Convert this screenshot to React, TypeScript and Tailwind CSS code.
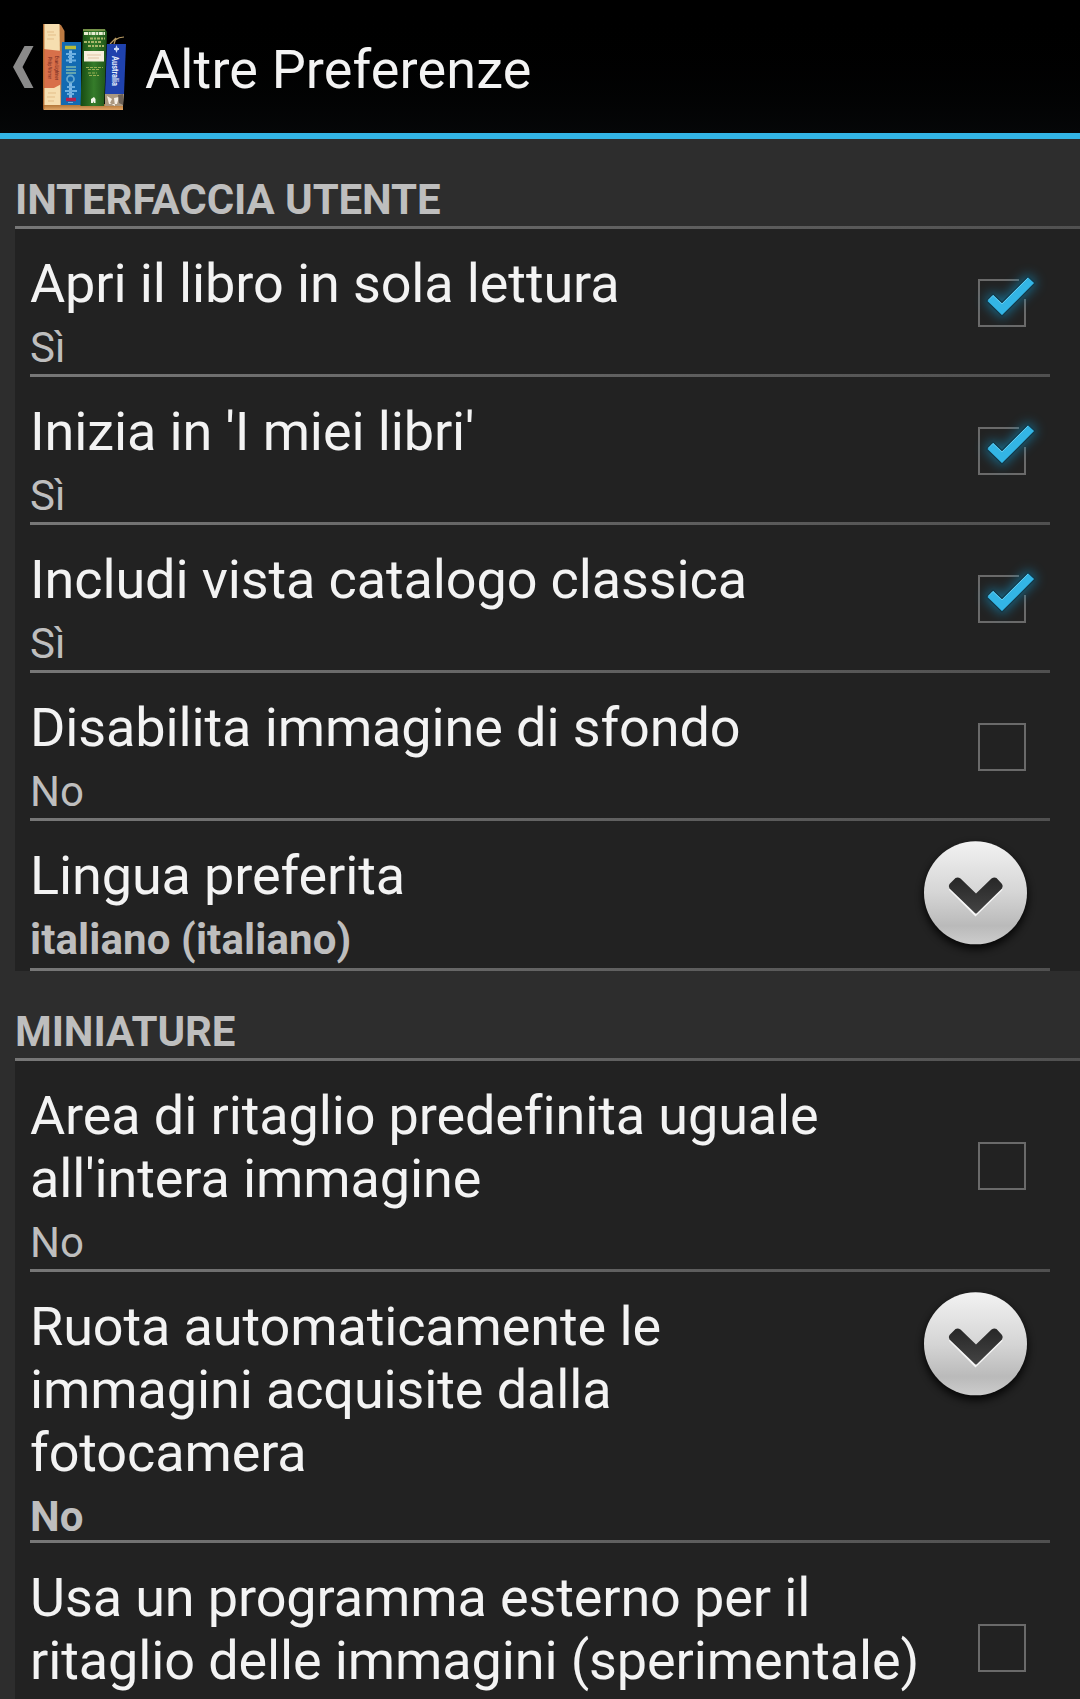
import React from "react";

function BooksIcon() {
  return (
    <svg className="ml-[3px] h-[90px] w-[92px] shrink-0" viewBox="40 20 92 90">
      <defs>
        <linearGradient id="greenBook" x1="0" x2="1" y1="0" y2="0">
          <stop offset="0" stopColor="#174a12" />
          <stop offset="0.5" stopColor="#357c2a" />
          <stop offset="1" stopColor="#1f5419" />
        </linearGradient>
        <linearGradient id="shelf" x1="0" x2="0" y1="0" y2="1">
          <stop offset="0" stopColor="#a96d30" />
          <stop offset="1" stopColor="#e0a566" />
        </linearGradient>
      </defs>
      {/* shelf */}
      <path d="M43.5 104 H123 V110 H43.5 Z" fill="url(#shelf)" />
      {/* orange book */}
      <path d="M58 24 L61 25 L64.500 31 V44 L61.500 106 H59 Z" fill="#bd7a42" />
      <path d="M43.5 24 H59.5 L60.500 105 H43.5 Z" fill="#f6deb0" />
      <path d="M43.5 49 L61.5 51 V84 L54 88 H43.5 Z" fill="#d8704a" />
      <path d="M43.8 24 V109" stroke="#b76a2c" strokeWidth="1.200" />
      <path d="M47 32 H54 M48 35 H56 M47 39 H54 M48 93 H56 M47 97 H55 M48 101 H54" stroke="#e3bd88" strokeWidth="1" />
      <text transform="translate(54.500 56) rotate(90)" fontSize="5.500" fill="#6e2720" textLength="24" lengthAdjust="spacingAndGlyphs">Evan Lightner</text>
      <text transform="translate(48 57) rotate(90)" fontSize="5.500" fill="#6e2720" textLength="22" lengthAdjust="spacingAndGlyphs">Philip Warner</text>
      {/* blue book */}
      <path d="M62 42 H81 V105 H61 Z" fill="#136ab2" />
      <path d="M65 47.5 H76" stroke="#b9bd3a" strokeWidth="3.5" />
      <path d="M70.500 50.500 V63 M70.500 83 V98" stroke="#7db8e8" strokeWidth="3" />
      <path d="M66 54 H76 M68 57 H74 M66 60.500 H76 M67 87 H75 M65 91 H77 M67 94 H74" stroke="#6cafe0" strokeWidth="2" />
      <circle cx="70.500" cy="79" r="3.500" fill="none" stroke="#63a7cc" strokeWidth="1.800" />
      <path d="M66 67 H76 M66 70 H76 M66 73 H76" stroke="#62a4ae" strokeWidth="2.200" />
      <path d="M66 99.500 H76" stroke="#b3204f" strokeWidth="3.500" />
      <path d="M68 102.500 H73" stroke="#6cafe0" strokeWidth="1" />
      {/* green book */}
      <path d="M83 29 H105 L107 32 L104 106 H80.500 Z" fill="url(#greenBook)" />
      <path d="M83 30 H105" stroke="#8f9f56" strokeWidth="1.500" />
      <path d="M84 33.500 H105" stroke="#e6ebd0" strokeWidth="3" strokeDasharray="4 0.700 2 0.700" />
      <path d="M90 38.500 H105 M84 42 H101 M88 46 H104" stroke="#a9b66a" strokeWidth="2" strokeDasharray="3 1 2 1" />
      <rect x="84" y="51" width="20" height="10.500" fill="#f8efdc" />
      <path d="M87 55 H101 M88 58 H99" stroke="#e0c3a3" strokeWidth="1" />
      <path d="M86 67.500 H103 M88 69.500 H100 M88 73 H97 M89 75.500 H99" stroke="#98ae52" strokeWidth="1.200" strokeDasharray="3 1" />
      <path d="M91 103 V99 L94 97 L95.500 99 V103 H94 V101 L93 103 Z" fill="#f3f5e8" />
      {/* australia book */}
      <path d="M110 44 L116 38 L114 44 M115 40 Q119 37 124 37" stroke="#b89a62" strokeWidth="1.200" fill="none" />
      <path d="M107 44 H126 L124 94 H105 Z" fill="#1f42ad" />
      <path d="M116.500 45 L118 49 L116.500 53 L115 49 Z M114 48 H119 V50 H114 Z" fill="#c9d8f6" />
      <text transform="translate(111.500 56) rotate(90)" fontSize="9.500" fontWeight="700" fill="#e6eefc" textLength="30" lengthAdjust="spacingAndGlyphs">Australia</text>
      <path d="M105 94 H124 L123 106 H105 Z" fill="#ab9880" />
      <path d="M107 96 L112 99 L110 103 L115 106 L114 98 L119 97 L117 104 H109 Z" fill="#f6efe4" />
      <path d="M118 95 L123 94 V105 L119 103 Z" fill="#6b6057" />
    </svg>
  );
}

function Checkbox({ checked, position }: { checked: boolean; position: string }) {
  return (
    <svg className={`absolute right-[30px] h-24 w-24 ${position}`} viewBox="954 255 96 96">
      {checked ? (
        <>
          <path d="M1019 280 H979 V326 H1025 V299" fill="none" stroke="#6a6a6a" strokeWidth="2" />
          <path
            className="blur-[6px]"
            d="M987 301 L993 294.500 L1002 303 L1028 277 L1034 283 L1002 315.500 Z"
            fill="#168fbd"
            stroke="#147ba4"
            strokeWidth="5"
            opacity="0.750"
          />
          <path d="M986.500 301 L993 294 L1002 302.500 L1028 276.500 L1035 283 L1002 316 Z" fill="#33b5e5" stroke="#123746" strokeWidth="1.200" />
          <path d="M988.500 300 L993 295.500 L1002 304 L1028 278" fill="none" stroke="#62cbf0" strokeWidth="1" />
        </>
      ) : (
        <rect x="979" y="280" width="46" height="46" fill="none" stroke="#6a6a6a" strokeWidth="2" />
      )}
    </svg>
  );
}

function Expander() {
  return (
    <svg className="absolute right-[40px] top-[6px] h-[132px] w-[130px]" viewBox="910 827 130 132">
      <defs>
        <linearGradient id="disc" x1="0" x2="0" y1="0" y2="1">
          <stop offset="0" stopColor="#f2f2f2" />
          <stop offset="0.500" stopColor="#d5d5d5" />
          <stop offset="0.820" stopColor="#bababa" />
          <stop offset="1" stopColor="#cccccc" />
        </linearGradient>
        <linearGradient id="arrow" x1="0" x2="0" y1="0" y2="1">
          <stop offset="0" stopColor="#272727" />
          <stop offset="1" stopColor="#444444" />
        </linearGradient>
      </defs>
      <circle className="blur-[4px]" cx="975.500" cy="897" r="52" fill="#000000" opacity="0.850" />
      <circle cx="975.500" cy="892.800" r="51.500" fill="url(#disc)" />
      <path d="M949.500 889 L975.500 915 L1002 889" fill="none" stroke="#f5f5f5" strokeWidth="2" />
      <path
        d="M955.500 878 Q958 877 960.500 878.500 L976 893.500 L991.500 878.500 Q994 877 996.500 878 L1002 884 Q1003.500 886 1002 888.500 L977 913 Q976 914 975 913 L949.500 888.500 Q948 886 949.500 884 Z"
        fill="url(#arrow)"
      />
    </svg>
  );
}

type Item = {
  lines: string[];
  value?: string;
  kind: "on" | "off" | "menu";
  height: string;
  control?: string;
};

const userInterface: Item[] = [
  { lines: ["Apri il libro in sola lettura"], value: "Sì", kind: "on", height: "h-[148px]" },
  { lines: ["Inizia in 'I miei libri'"], value: "Sì", kind: "on", height: "h-[148px]" },
  { lines: ["Includi vista catalogo classica"], value: "Sì", kind: "on", height: "h-[148px]" },
  { lines: ["Disabilita immagine di sfondo"], value: "No", kind: "off", height: "h-[148px]" },
  { lines: ["Lingua preferita"], value: "italiano (italiano)", kind: "menu", height: "h-[150px]" },
];

const thumbnails: Item[] = [
  {
    lines: ["Area di ritaglio predefinita uguale", "all'intera immagine"],
    value: "No",
    kind: "off",
    height: "h-[211px]",
    control: "top-[57px]",
  },
  {
    lines: ["Ruota automaticamente le", "immagini acquisite dalla", "fotocamera"],
    value: "No",
    kind: "menu",
    height: "h-[271px]",
  },
  {
    lines: ["Usa un programma esterno per il", "ritaglio delle immagini (sperimentale)"],
    kind: "off",
    height: "h-[211px]",
    control: "top-[57px]",
  },
];

function Row({ item }: { item: Item }) {
  return (
    <div className={`relative flex flex-col justify-between pl-[15px] pr-[30px] pt-[23px] ${item.height}`}>
      <div className="whitespace-nowrap">
        <div className="text-[54px] leading-[63px] tracking-[-0.12px] text-[#f3f3f3]">
          {item.lines.map((line) => (
            <div key={line}>{line}</div>
          ))}
        </div>
        {item.value && (
          <div className={`mt-2 h-[49px] text-[42px] leading-[49px] text-[#bebebe] ${item.kind === "menu" ? "-mb-2 font-bold tracking-[0.1px]" : ""}`}>
            {item.value}
          </div>
        )}
      </div>
      <div className="h-[3px] shrink-0 bg-linear-to-r from-[#777777] to-[#505050]" />
      {item.kind === "menu" ? (
        <Expander />
      ) : (
        <Checkbox checked={item.kind === "on"} position={item.control ?? "top-[26px]"} />
      )}
    </div>
  );
}

function Section({ title, items }: { title: string; items: Item[] }) {
  return (
    <section className="pl-[15px]">
      <div className="flex h-[90px] flex-col justify-end">
        <h2 className="mb-[2px] text-[42px] font-bold leading-[49px] tracking-[-0.1px] text-[#bebebe]">{title}</h2>
        <div className="h-[3px] bg-linear-to-r from-[#777777] to-[#505050]" />
      </div>
      <div className="bg-[#222222]">
        {items.map((item) => (
          <Row key={item.lines[0]} item={item} />
        ))}
      </div>
    </section>
  );
}

export default function App() {
  return (
    <main className="h-[1699px] w-[1080px] overflow-hidden bg-[#2d2d2d] font-['Roboto',sans-serif]">
      <header className="flex h-[139px] items-start border-b-[6px] border-[#33b5e5] bg-linear-to-b from-black to-[#050708]">
        <div className="flex pt-5">
          <svg className="h-[90px] w-[37px]" viewBox="0 20 37 90">
            <path d="M24.500 46 H33.500 L22.500 67 L33.500 88 H24.500 L13 67 Z" fill="#8a8a8a" />
          </svg>
          <BooksIcon />
        </div>
        <h1 className="ml-[13px] mt-[38px] text-[54px] leading-[63px] tracking-[0.13px] text-[#f3f3f3]">Altre Preferenze</h1>
      </header>
      <Section title="INTERFACCIA UTENTE" items={userInterface} />
      <Section title="MINIATURE" items={thumbnails} />
    </main>
  );
}
